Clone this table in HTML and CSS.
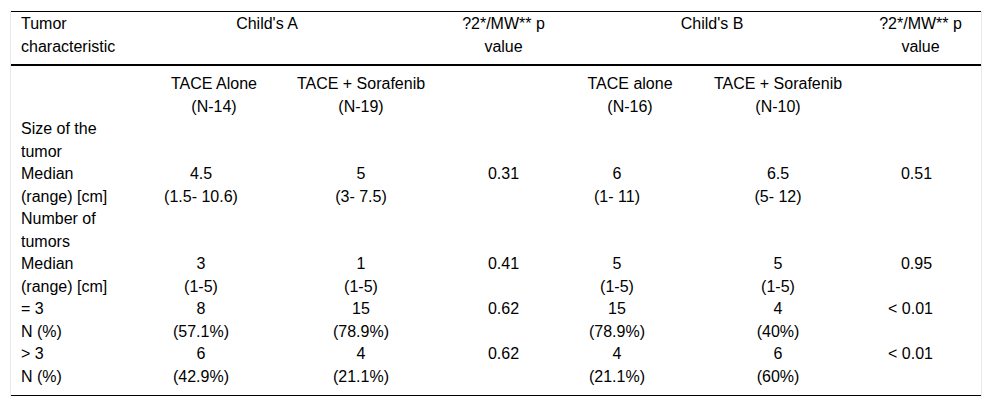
FILE: index.html
```html
<!DOCTYPE html>
<html lang="en">
<head>
<meta charset="utf-8">
<title>Tumor characteristics</title>
<link rel="stylesheet" href="styles.css">
</head>
<body>
<div class="wrap">
<table class="tbl">
<colgroup>
<col class="c1"><col class="c2"><col class="c3"><col class="c4"><col class="c5"><col class="c6"><col class="c7">
</colgroup>
<thead>
<tr>
<th class="left">Tumor<br>characteristic</th>
<th colspan="2" class="group-a">Child's A</th>
<th>?2*/MW** p<br>value</th>
<th colspan="2">Child's B</th>
<th>?2*/MW** p<br>value</th>
</tr>
</thead>
<tbody>
<tr>
<td class="left"></td>
<td>TACE Alone<br>(N-14)</td>
<td>TACE + Sorafenib<br>(N-19)</td>
<td></td>
<td>TACE alone<br>(N-16)</td>
<td>TACE + Sorafenib<br>(N-10)</td>
<td></td>
</tr>
<tr>
<td class="left">Size of the<br>tumor</td>
<td></td><td></td><td></td><td></td><td></td><td></td>
</tr>
<tr>
<td class="left">Median<br>(range) [cm]</td>
<td class="shift">4.5<br>(1.5- 10.6)</td>
<td>5<br>(3- 7.5)</td>
<td>0.31</td>
<td class="shift">6<br>(1- 11)</td>
<td>6.5<br>(5- 12)</td>
<td class="p7">0.51</td>
</tr>
<tr>
<td class="left">Number of<br>tumors</td>
<td></td><td></td><td></td><td></td><td></td><td></td>
</tr>
<tr>
<td class="left">Median<br>(range) [cm]</td>
<td class="shift">3<br>(1-5)</td>
<td>1<br>(1-5)</td>
<td>0.41</td>
<td class="shift">5<br>(1-5)</td>
<td>5<br>(1-5)</td>
<td class="p7">0.95</td>
</tr>
<tr>
<td class="left">= 3<br>N (%)</td>
<td class="shift">8<br>(57.1%)</td>
<td>15<br>(78.9%)</td>
<td>0.62</td>
<td class="shift">15<br>(78.9%)</td>
<td>4<br>(40%)</td>
<td class="p7 lt">&lt; 0.01</td>
</tr>
<tr>
<td class="left">&gt; 3<br>N (%)</td>
<td class="shift">6<br>(42.9%)</td>
<td>4<br>(21.1%)</td>
<td>0.62</td>
<td class="shift">4<br>(21.1%)</td>
<td>6<br>(60%)</td>
<td class="p7 lt">&lt; 0.01</td>
</tr>
</tbody>
</table>
</div>
</body>
</html>
```
FILE: styles.css
```css
html, body {
  margin: 0;
  padding: 0;
  background: #fff;
}
body {
  font-family: "Liberation Sans", Arial, sans-serif;
  font-size: 16px;
  color: #000;
}
.wrap {
  margin: 11px 10px 0;
  border-left: 1px solid #e8e8e8;
  border-right: 1px solid #e8e8e8;
}
.tbl {
  width: 100%;
  table-layout: fixed;
  border-collapse: collapse;
  line-height: 22.5px;
}
.c1 { width: 138px; }
.c2 { width: 130px; }
.c3 { width: 164px; }
.c4 { width: 121px; }
.c5 { width: 132px; }
.c6 { width: 164px; }
.c7 { width: 121px; }
.tbl th, .tbl td {
  padding: 0 10px;
  text-align: center;
  vertical-align: top;
  white-space: nowrap;
  font-weight: normal;
}
.tbl .left {
  text-align: left;
}
.tbl td.shift {
  padding-left: 0;
  padding-right: 26px;
}
.tbl td.p7 {
  padding-left: 6px;
  padding-right: 14px;
}
.tbl td.lt {
  padding-left: 0;
  padding-right: 20px;
}
.tbl thead th {
  border-top: 1px solid #000;
  border-bottom: 2px solid #000;
  padding-top: 1px;
  padding-bottom: 6px;
}
.tbl thead th.group-a {
  padding-right: 68px;
}
.tbl tbody tr:first-child td {
  padding-top: 7px;
}
.tbl tbody tr:last-child td {
  padding-bottom: 7px;
  border-bottom: 1px solid #000;
}
```
